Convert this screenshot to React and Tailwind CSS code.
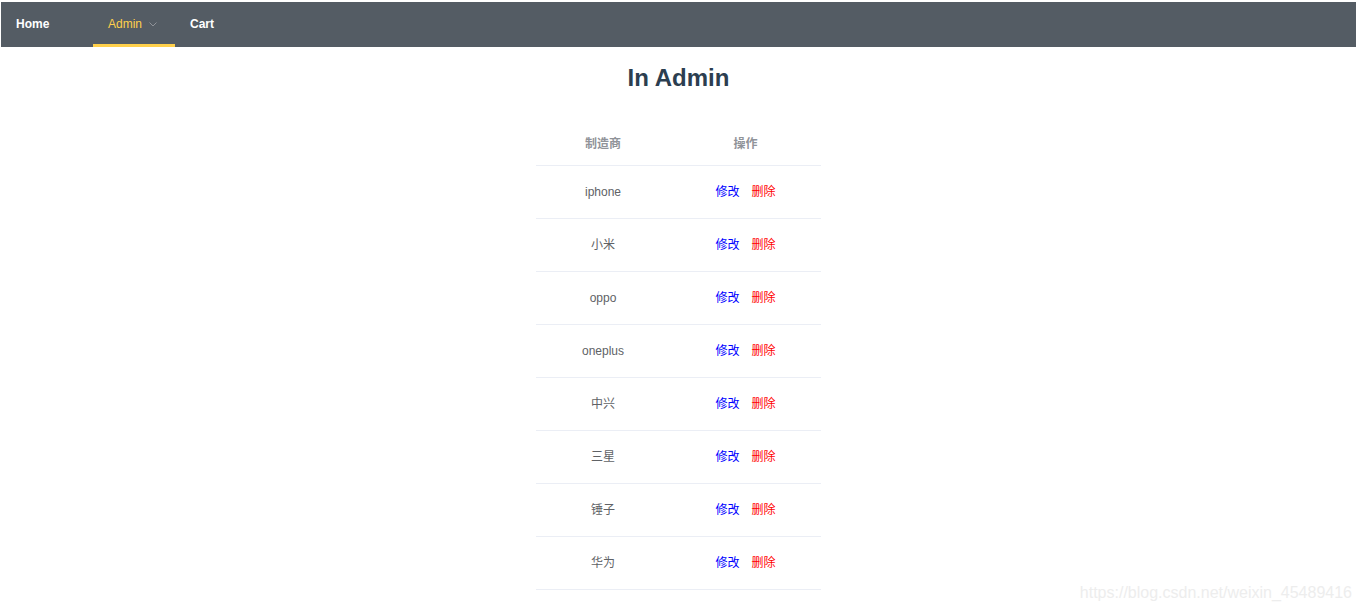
import React from 'react';

const brands = ['iphone', '小米', 'oppo', 'oneplus', '中兴', '三星', '锤子', '华为'];

const font = { fontFamily: '"Liberation Sans", Arial, "Noto Sans CJK SC", sans-serif' };

const NavBar = () => (
  <div className="flex h-[45px] bg-[#545c64] text-[12px] font-bold">
    <div className="flex items-center pl-[15px] pb-[2px] w-[92px] text-white">Home</div>
    <div className="relative flex items-center pl-[15px] w-[82px] font-normal text-[#ffd04b] border-b-[3px] border-[#ffd04b]">
      <span className="mt-[1px]">Admin</span>
      <svg className="ml-[6px] mt-[1px]" width="10" height="10" viewBox="0 0 10 10" fill="none">
        <path d="M1.5 3.5 L5 7 L8.5 3.5" stroke="#909399" strokeWidth="1" />
      </svg>
    </div>
    <div className="flex items-center pl-[15px] pb-[2px] text-white">Cart</div>
  </div>
);

const App = () => {
  return (
    <div className="relative min-h-[614px] bg-white pt-[2px] pl-[1px] pr-[5px]" style={font}>
      <NavBar />
      <h2 className="mt-[15px] h-[32px] leading-[32px] text-center text-[24px] font-bold text-[#2c3e50]">In Admin</h2>
      <div className="mt-[28px] flex justify-center">
        <div className="w-[285px] text-[12px]">
          <div className="flex h-[44px] items-center border-b border-[#ebeef5] font-bold text-[#909399]">
            <div className="w-[134px] text-center">制造商</div>
            <div className="flex-1 text-center">操作</div>
          </div>
          {brands.map((b) => (
            <div key={b} className="flex h-[53px] items-center border-b border-[#ebeef5] text-[#606266]">
              <div className="w-[134px] text-center">{b}</div>
              <div className="flex flex-1 justify-center gap-[12px]">
                <span className="text-[#0000ff]">修改</span>
                <span className="text-[#ff0000]">删除</span>
              </div>
            </div>
          ))}
        </div>
      </div>
      <div className="absolute right-[9px] bottom-[9px] text-[16px] text-[#ededed]">https://blog.csdn.net/weixin_45489416</div>
    </div>
  );
};

export default App;
